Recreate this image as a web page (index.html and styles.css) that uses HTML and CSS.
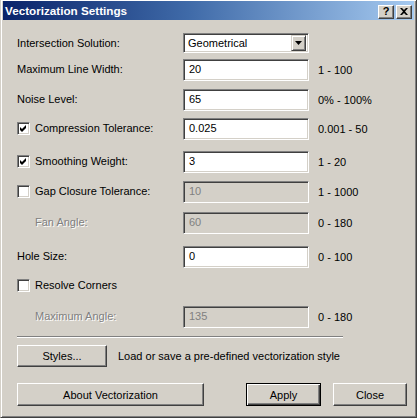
FILE: index.html
```html
<!DOCTYPE html>
<html>
<head>
<meta charset="utf-8">
<link rel="stylesheet" href="styles.css">
</head>
<body>
<div class="window">
  <div class="titlebar">
    <span class="title">Vectorization Settings</span>
    <div class="tb-buttons">
      <div class="tb-btn help">?</div>
      <div class="tb-btn">
        <svg width="8" height="7" viewBox="0 0 8 7"><path d="M0 0h2l2 2l2-2h2l-3 3.5l3 3.5h-2l-2-2l-2 2h-2l3-3.5z" fill="#000"/></svg>
      </div>
    </div>
  </div>
  <div class="content">
    <div class="form">
      <div class="label">Intersection Solution:</div>
      <div class="select"><span class="select-text">Geometrical</span><span class="select-btn"><svg width="7" height="4" viewBox="0 0 7 4"><path d="M0 0h7l-3.5 4z" fill="#000"/></svg></span></div>
      <div class="range"></div>

      <div class="label">Maximum Line Width:</div>
      <div class="field">20</div>
      <div class="range">1 - 100</div>

      <div class="label">Noise Level:</div>
      <div class="field">65</div>
      <div class="range">0% - 100%</div>

      <div class="label"><span class="check on"><svg width="9" height="9" viewBox="0 0 9 9"><path d="M1 3l2 2l4-4v3l-4 4l-2-2z" fill="#000"/></svg></span>Compression Tolerance:</div>
      <div class="field">0.025</div>
      <div class="range">0.001 - 50</div>

      <div class="label"><span class="check on"><svg width="9" height="9" viewBox="0 0 9 9"><path d="M1 3l2 2l4-4v3l-4 4l-2-2z" fill="#000"/></svg></span>Smoothing Weight:</div>
      <div class="field">3</div>
      <div class="range">1 - 20</div>

      <div class="label"><span class="check"></span>Gap Closure Tolerance:</div>
      <div class="field disabled">10</div>
      <div class="range">1 - 1000</div>

      <div class="label sub disabled-text">Fan Angle:</div>
      <div class="field disabled">60</div>
      <div class="range">0 - 180</div>

      <div class="label">Hole Size:</div>
      <div class="field">0</div>
      <div class="range">0 - 100</div>

      <div class="label wide"><span class="check"></span>Resolve Corners</div>

      <div class="label sub disabled-text">Maximum Angle:</div>
      <div class="field disabled">135</div>
      <div class="range">0 - 180</div>
    </div>
    <div class="separator"></div>
    <div class="styles-row">
      <div class="button styles-btn">Styles...</div>
      <span class="hint">Load or save a pre-defined vectorization style</span>
    </div>
    <div class="actions">
      <div class="button about-btn">About Vectorization</div>
      <div class="right-actions">
        <div class="button default apply-btn">Apply</div>
        <div class="button close-btn">Close</div>
      </div>
    </div>
  </div>
</div>
</body>
</html>
```

FILE: styles.css
```css
html, body {
  margin: 0;
  padding: 0;
  background: #d4d0c8;
}

body {
  font-family: "Liberation Sans", Arial, sans-serif;
  font-size: 11px;
  color: #000;
}

.window {
  width: 417px;
  height: 418px;
  box-sizing: border-box;
  background: #d4d0c8;
  border: 1px solid;
  border-top: 0;
  border-color: #d4d0c8 #404040 #404040 #d4d0c8;
  box-shadow: inset 1px 1px 0 #fff, inset -1px -1px 0 #808080;
  padding: 1px 2px 2px;
  overflow: hidden;
}

.titlebar {
  height: 19px;
  background: linear-gradient(to right, #0a246a 0%, #3f6aa8 45%, #a6caf0 100%);
  display: flex;
  align-items: center;
  justify-content: space-between;
  padding: 0 2px 0 2px;
}

.title {
  color: #fff;
  font-weight: bold;
  font-size: 11.7px;
}

.tb-buttons {
  display: flex;
  gap: 2px;
  margin-top: 2px;
}

.tb-btn {
  width: 16px;
  height: 14px;
  box-sizing: border-box;
  background: #d4d0c8;
  border: 1px solid;
  border-color: #fff #404040 #404040 #fff;
  box-shadow: inset -1px -1px 0 #808080;
  display: flex;
  align-items: center;
  justify-content: center;
}

.tb-btn.help {
  font-weight: bold;
  font-size: 11px;
  line-height: 11px;
}

.content {
  padding: 13px 0 0 14px;
}

.form {
  display: grid;
  grid-template-columns: 157px 126px auto;
  grid-template-rows: 26px 30px 29px 33px 30px 31px 34px 29px 31px 22px;
  column-gap: 9px;
  align-items: start;
}

.label {
  height: 22px;
  display: flex;
  align-items: center;
  margin-top: -1px;
  white-space: nowrap;
}

.label.wide {
  grid-column: 1 / 4;
}

.label.sub {
  padding-left: 18px;
}

.disabled-text {
  color: #808080;
  text-shadow: 1px 1px 0 #fff;
}

.check {
  width: 13px;
  height: 13px;
  box-sizing: border-box;
  background: #fff;
  border: 1px solid;
  border-color: #808080 #fff #fff #808080;
  box-shadow: inset 1px 1px 0 #404040, inset -1px -1px 0 #d4d0c8;
  margin-right: 5px;
  display: flex;
  align-items: center;
  justify-content: center;
  flex: none;
}

.field, .select {
  width: 126px;
  box-sizing: border-box;
  background: #fff;
  border: 1px solid;
  border-color: #808080 #fff #fff #808080;
  box-shadow: inset 1px 1px 0 #404040, inset -1px -1px 0 #d4d0c8;
}

.field {
  height: 22px;
  padding: 2px 5px 0;
  line-height: 14px;
}

.field.disabled {
  background: #d4d0c8;
  color: #808080;
}

.select {
  height: 20px;
  display: flex;
  align-items: center;
  justify-content: space-between;
  padding: 2px;
}

.select-text {
  padding-left: 2px;
}

.select-btn {
  width: 15px;
  height: 16px;
  box-sizing: border-box;
  background: #d4d0c8;
  border: 1px solid;
  border-color: #d4d0c8 #404040 #404040 #d4d0c8;
  box-shadow: inset 1px 1px 0 #fff, inset -1px -1px 0 #808080;
  display: flex;
  align-items: center;
  justify-content: center;
}

.range {
  height: 22px;
  display: flex;
  align-items: center;
  white-space: nowrap;
}

.separator {
  width: 326px;
  height: 2px;
  border-top: 1px solid #808080;
  border-bottom: 1px solid #fff;
  box-sizing: border-box;
  margin-top: 8px;
}

.styles-row {
  display: flex;
  align-items: center;
  gap: 11px;
  margin-top: 7px;
}

.button {
  box-sizing: border-box;
  background: #d4d0c8;
  border: 1px solid;
  border-color: #fff #404040 #404040 #fff;
  box-shadow: inset -1px -1px 0 #808080;
  display: flex;
  align-items: center;
  justify-content: center;
}

.button.default {
  border: 1px solid #000;
  box-shadow: inset 1px 1px 0 #fff, inset -1px -1px 0 #404040, inset -2px -2px 0 #808080;
}

.styles-btn {
  width: 90px;
  height: 22px;
}

.actions {
  display: flex;
  margin-top: 16px;
  height: 23px;
}

.about-btn {
  width: 187px;
}

.right-actions {
  display: flex;
  gap: 12px;
  margin-left: 42px;
}

.apply-btn {
  width: 75px;
}

.close-btn {
  width: 74px;
}
```
